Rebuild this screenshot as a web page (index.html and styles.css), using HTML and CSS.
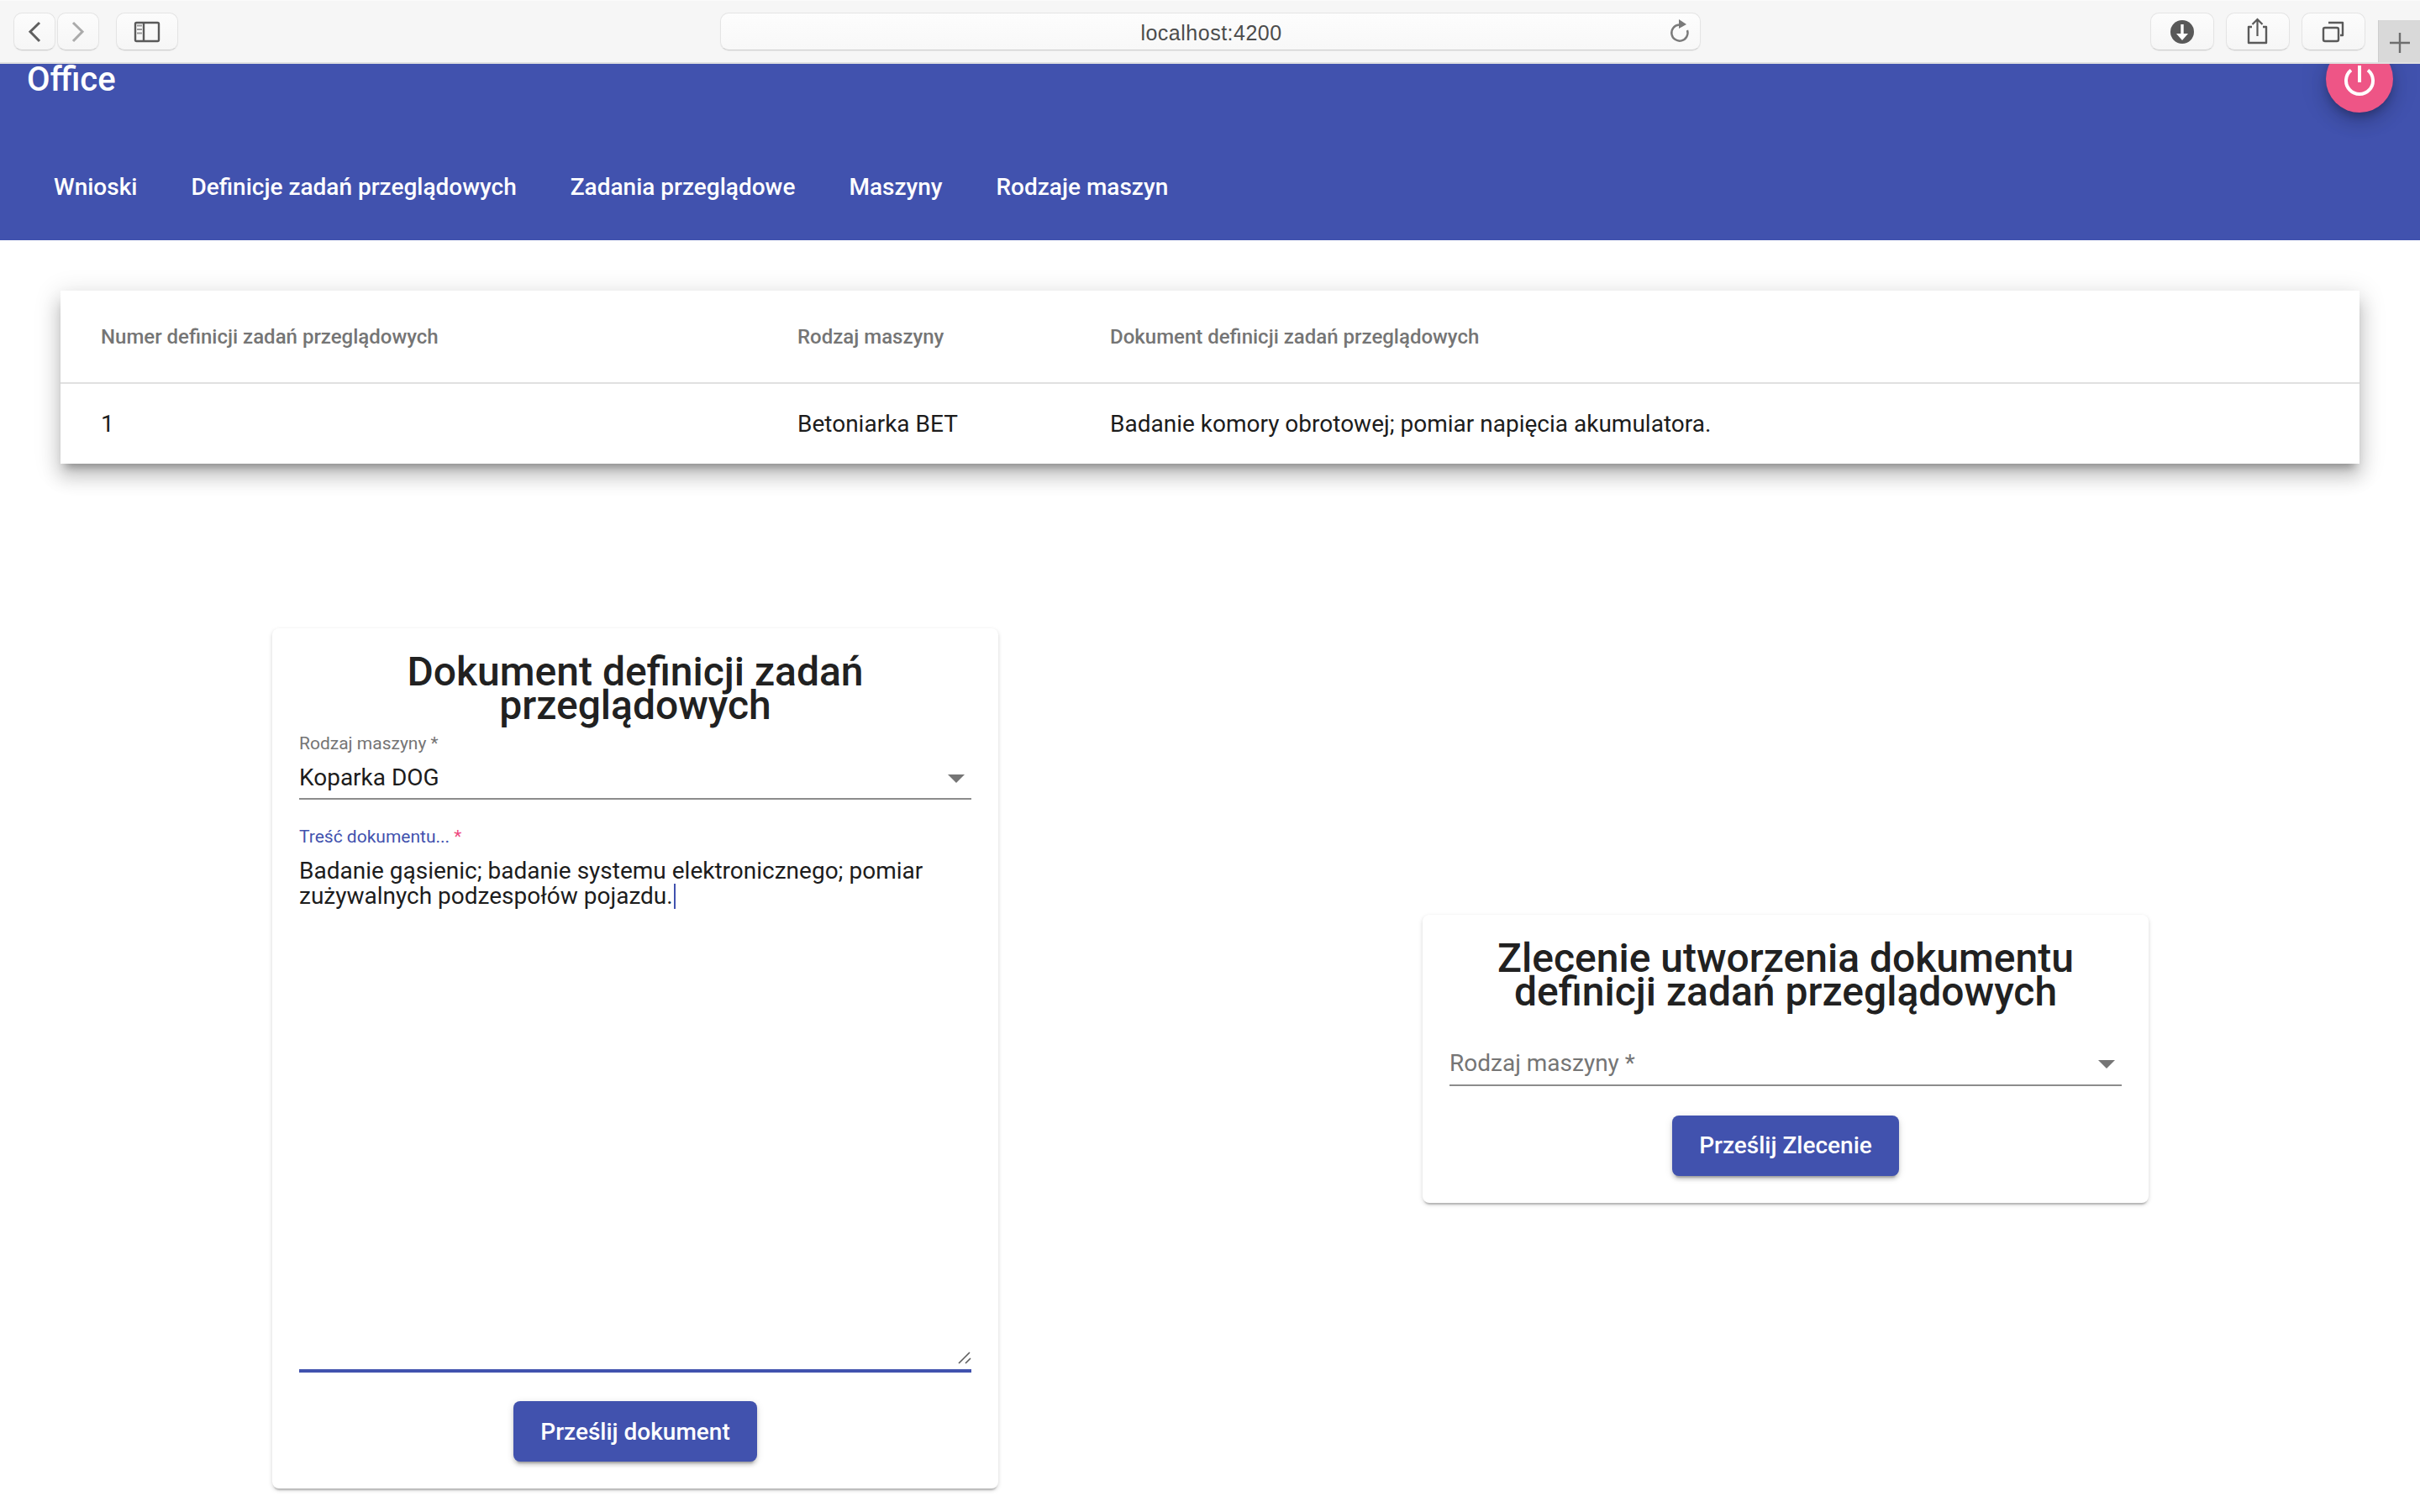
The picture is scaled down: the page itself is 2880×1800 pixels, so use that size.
FILE: index.html
```html
<!DOCTYPE html>
<html lang="pl">
<head>
<meta charset="utf-8">
<title>Office</title>
<link rel="stylesheet" href="styles.css">
</head>
<body>
<div class="toolbar">
  <div class="tool-group">
    <div class="tool-btn nav-btn">
      <svg class="icon" width="50" height="45" viewBox="0 0 50 45"><path d="M31 12 L20 22.7 L31 34" fill="none" stroke="#5f5f5f" stroke-width="3"/></svg>
    </div>
    <div class="tool-btn nav-btn">
      <svg class="icon" width="50" height="45" viewBox="0 0 50 45"><path d="M19 12 L30 22.7 L19 34" fill="none" stroke="#ababab" stroke-width="3"/></svg>
    </div>
  </div>
  <div class="tool-btn sidebar-btn">
    <svg class="icon" width="74" height="45" viewBox="0 0 74 45"><rect x="23" y="12" width="28" height="22" rx="1.5" fill="none" stroke="#5a5a5a" stroke-width="2.4"/><path d="M33 12 V34" stroke="#5a5a5a" stroke-width="2.4"/><path d="M25 15.5 H31 M25 20 H31 M25 24.5 H31" stroke="#9a9a9a" stroke-width="2"/></svg>
  </div>
  <div class="url-box">
    <span class="url-text">localhost:4200</span>
    <svg class="reload" width="24" height="28" viewBox="0 0 24 28"><path d="M11 6.5 A9.6 9.6 0 1 0 21 13" fill="none" stroke="#7a7a7a" stroke-width="2.4"/><path d="M11 0 L20 6 L11 11 Z" fill="#7a7a7a"/></svg>
  </div>
  <div class="tool-btn action-btn first-action">
    <svg class="icon" width="76" height="45" viewBox="0 0 76 45"><circle cx="38" cy="23" r="14" fill="#595959"/><path d="M38 14 V28" stroke="#fff" stroke-width="3.4"/><path d="M31 25 H45 L38 33 Z" fill="#fff"/></svg>
  </div>
  <div class="tool-btn action-btn">
    <svg class="icon" width="76" height="45" viewBox="0 0 76 45"><path d="M31 17 H27 V36 H48 V17 H44" fill="none" stroke="#5a5a5a" stroke-width="2.4" stroke-linejoin="round"/><path d="M37.5 8 V28 M31.5 14 L37.5 8 L43.5 14" fill="none" stroke="#5a5a5a" stroke-width="2.2"/></svg>
  </div>
  <div class="tool-btn action-btn">
    <svg class="icon" width="76" height="45" viewBox="0 0 76 45"><rect x="26" y="18" width="18" height="16" rx="2" fill="none" stroke="#5a5a5a" stroke-width="2.4"/><path d="M32 12 H49 V27 H46" fill="none" stroke="#5a5a5a" stroke-width="2.4" stroke-linejoin="round"/></svg>
  </div>
  <div class="new-tab">
    <svg width="24" height="24" viewBox="0 0 24 24"><path d="M0 12 H24 M12 0 V24" stroke="#6e6e6e" stroke-width="2.4"/></svg>
  </div>
</div>

<header class="app-header">
  <div class="app-title">Office</div>
  <nav class="tabs">
    <a class="tab">Wnioski</a>
    <a class="tab">Definicje zadań przeglądowych</a>
    <a class="tab">Zadania przeglądowe</a>
    <a class="tab">Maszyny</a>
    <a class="tab">Rodzaje maszyn</a>
  </nav>
  <button class="fab">
    <svg width="40" height="38" viewBox="0 0 40 38"><path d="M10 5.5 A16 16 0 1 0 30 5.5" fill="none" stroke="#fff" stroke-width="4"/><path d="M20 0 V20" stroke="#fff" stroke-width="4"/></svg>
  </button>
</header>

<main class="content">
  <table class="data-table">
    <colgroup>
      <col class="col-number">
      <col class="col-type">
      <col>
    </colgroup>
    <thead>
      <tr>
        <th class="first-cell">Numer definicji zadań przeglądowych</th>
        <th>Rodzaj maszyny</th>
        <th>Dokument definicji zadań przeglądowych</th>
      </tr>
    </thead>
    <tbody>
      <tr>
        <td class="first-cell">1</td>
        <td>Betoniarka BET</td>
        <td>Badanie komory obrotowej; pomiar napięcia akumulatora.</td>
      </tr>
    </tbody>
  </table>

  <div class="cards">
    <section class="card">
      <h2 class="card-title">Dokument definicji zadań przeglądowych</h2>
      <div class="select-field">
        <div class="float-label">Rodzaj maszyny *</div>
        <div class="select-row"><span class="select-value">Koparka DOG</span><span class="arrow"></span></div>
      </div>
      <div class="text-field">
        <div class="float-label focused">Treść dokumentu... <span class="required">*</span></div>
        <div class="text-value">Badanie gąsienic; badanie systemu elektronicznego; pomiar zużywalnych podzespołów pojazdu.<span class="caret"></span></div>
        <svg class="resizer" width="16" height="15" viewBox="0 0 16 15"><path d="M1 14 L14 1 M9 14 L15 8" stroke="#5e5e5e" stroke-width="1.6"/></svg>
      </div>
      <button class="submit">Prześlij dokument</button>
    </section>

    <section class="card">
      <h2 class="card-title">Zlecenie utworzenia dokumentu definicji zadań przeglądowych</h2>
      <div class="select-field empty">
        <div class="select-row"><span class="select-placeholder">Rodzaj maszyny *</span><span class="arrow"></span></div>
      </div>
      <button class="submit">Prześlij Zlecenie</button>
    </section>
  </div>
</main>
</body>
</html>
```
FILE: styles.css
```css
* { box-sizing: border-box; }

html, body {
  margin: 0;
  height: 100%;
  overflow: hidden;
  background: #fff;
  font-family: Roboto, "Noto Sans", sans-serif;
}

.toolbar {
  position: relative;
  z-index: 3;
  height: 76px;
  display: flex;
  align-items: flex-start;
  padding: 15px 0 0 16px;
  background: #f6f6f6;
  border-top: 1px solid #fbfbfb;
  border-bottom: 2px solid #e0e0e0;
}

.tool-group { display: flex; gap: 2px; margin-top: -1px; }

.tool-btn, .url-box {
  height: 45px;
  border: 1px solid #e4e4e4;
  border-bottom-color: #cfcfcf;
  border-radius: 10px;
  background: linear-gradient(#fcfcfc, #f6f6f6);
  box-shadow: 0 1px 1px rgba(0,0,0,.05);
}

.icon { display: block; margin: -1px; }

.nav-btn { width: 50px; }
.sidebar-btn { width: 74px; margin: -1px 0 0 20px; }

.url-box {
  width: 1168px;
  margin: -1px 0 0 645px;
  position: relative;
  display: flex;
  align-items: center;
  justify-content: center;
  background: linear-gradient(#fdfdfd, #f8f8f8);
}

.url-text {
  font-family: "Liberation Sans", Arial, sans-serif;
  font-size: 25px;
  letter-spacing: .5px;
  color: #4c4c4c;
  padding: 3px 0 0 2px;
}

.reload { position: absolute; right: 12px; top: 7px; }

.action-btn { width: 76px; margin: -1px 0 0 14px; }
.first-action { margin-left: 535px; }

.new-tab {
  width: 50px;
  height: 50px;
  margin: 8px 0 0 15px;
  background: #d9d9d9;
  border-left: 1px solid #cdcdcd;
  display: flex;
  align-items: center;
  justify-content: center;
  padding-top: 4px;
}

.app-header {
  position: relative;
  display: flow-root;
  height: 210px;
  background: #4152ae;
  color: #fff;
}

.app-title {
  margin-top: -1px;
  padding-left: 32px;
  font-size: 40px;
  font-weight: 500;
  line-height: 40px;
}

.tabs {
  display: flex;
  margin-top: 59px;
  padding-left: 32px;
}

.tab {
  height: 96px;
  display: flex;
  align-items: center;
  padding: 0 32px;
  font-size: 28px;
  font-weight: 500;
}

.fab {
  position: absolute;
  top: -22px;
  right: 32px;
  width: 80px;
  height: 80px;
  padding: 24px 0 0;
  border: 0;
  border-radius: 50%;
  background: #ee5586;
  display: flex;
  align-items: flex-start;
  justify-content: center;
  box-shadow: 0 6px 10px -2px rgba(0,0,0,.2), 0 12px 20px 0 rgba(0,0,0,.14), 0 2px 36px 0 rgba(0,0,0,.12);
}

.data-table {
  display: table;
  width: 2736px;
  margin: 60px 0 0 72px;
  table-layout: fixed;
  border-collapse: collapse;
  background: #fff;
  box-shadow: 0 10px 10px -6px rgba(0,0,0,.3), 0 16px 20px 2px rgba(0,0,0,.14), 0 6px 28px 4px rgba(0,0,0,.12);
}

.col-number { width: 877px; }
.col-type { width: 372px; }

th, td { padding: 0; text-align: left; }

th {
  height: 110px;
  font-size: 24px;
  font-weight: 500;
  color: #757575;
  border-bottom: 2px solid #e0e0e0;
}

td {
  height: 96px;
  font-size: 28px;
  color: #1c1c1c;
}

.first-cell { padding-left: 48px; }

.cards {
  display: flex;
  align-items: center;
  gap: 505px;
  margin-top: 196px;
  padding-left: 324px;
}

.card {
  width: 864px;
  padding: 32px;
  display: flex;
  flex-direction: column;
  background: #fff;
  border-radius: 8px;
  box-shadow: 0 4px 2px -2px rgba(0,0,0,.2), 0 2px 4px 0 rgba(0,0,0,.1), 0 2px 6px 0 rgba(0,0,0,.08);
}

.card-title {
  margin: 0;
  font-size: 48px;
  font-weight: 500;
  line-height: 40px;
  text-align: center;
  color: #212121;
}

.select-field {
  padding: 15px 0 8px;
  border-bottom: 2px solid #8c8c8c;
}

.select-field.empty { padding: 49px 0 9px; }

.float-label {
  font-size: 21px;
  line-height: 21px;
  color: #757575;
}

.focused { color: #4152ae; }
.required { color: #ee4a80; }

.select-row {
  display: flex;
  align-items: center;
  justify-content: space-between;
  margin-top: 14px;
  height: 32px;
  font-size: 28px;
  line-height: 32px;
}

.empty .select-row { margin-top: 0; }

.select-value { color: #1c1c1c; }
.select-placeholder { color: #757575; }

.arrow {
  width: 0;
  height: 0;
  margin: 2px 8px 0 0;
  border-left: 10px solid transparent;
  border-right: 10px solid transparent;
  border-top: 10px solid #757575;
}

.text-field {
  position: relative;
  height: 648px;
  margin-top: 34px;
  border-bottom: 4px solid #4152ae;
}

.text-value {
  margin-top: 15px;
  font-size: 28px;
  line-height: 30px;
  color: #1c1c1c;
}

.caret {
  display: inline-block;
  width: 2px;
  height: 30px;
  margin-left: 1px;
  vertical-align: top;
  background: #4152ae;
}

.resizer {
  position: absolute;
  right: 0;
  bottom: 6px;
}

.submit {
  align-self: center;
  height: 72px;
  margin-top: 34px;
  padding: 0 32px;
  border: 0;
  border-radius: 8px;
  background: #4152ae;
  color: #fff;
  font-family: inherit;
  font-size: 28px;
  font-weight: 500;
  box-shadow: 0 6px 2px -4px rgba(0,0,0,.2), 0 4px 4px 0 rgba(0,0,0,.14), 0 2px 10px 0 rgba(0,0,0,.12);
}

.empty + .submit { margin-top: 35px; }
```
